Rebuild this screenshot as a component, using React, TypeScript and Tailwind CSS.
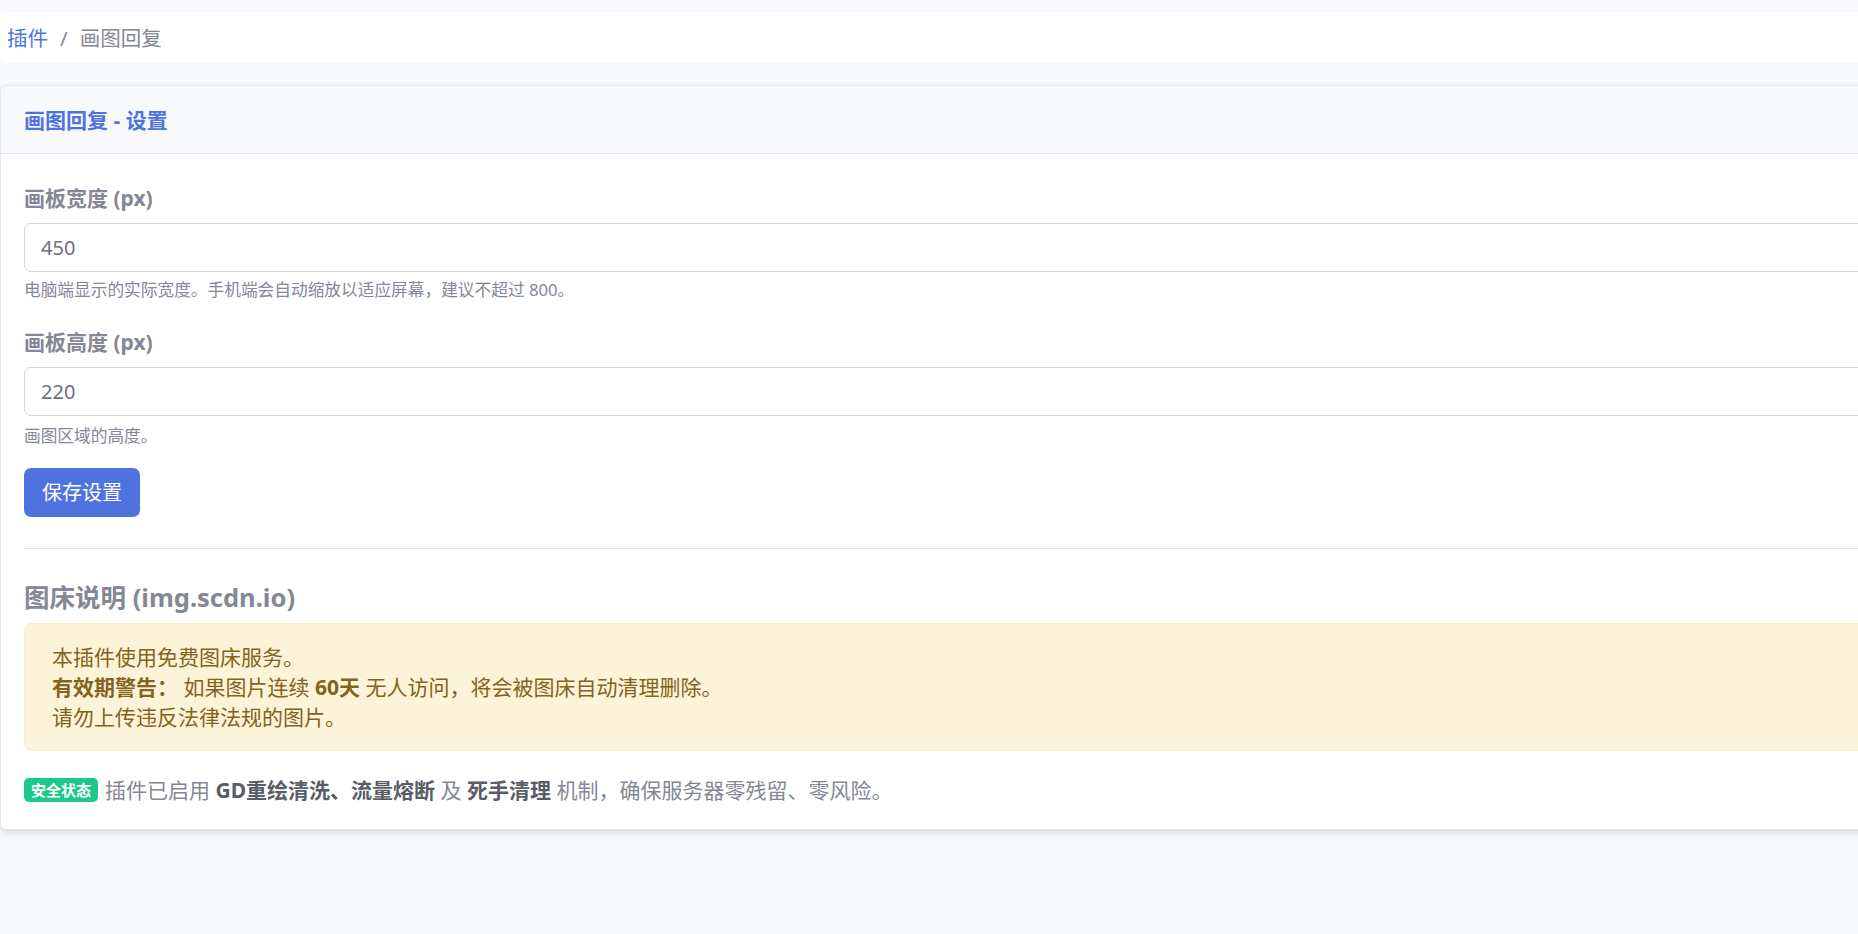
import React from 'react'

// Plugin settings page: breadcrumb + settings card
export default function App() {
  return (
    <div className="min-h-screen overflow-hidden bg-[#f8f9fc] pt-[12px] font-['Noto_Sans','Noto_Sans_CJK_SC',sans-serif] text-[21px] text-[#858796]">
      {/* Breadcrumb */}
      <nav className="mr-[-40px] flex h-[51px] items-center rounded-l-[7px] bg-white pl-[7px] text-[20.5px] leading-[30px]">
        <a href="#" className="text-[#4e73df]">插件</a>
        <span className="px-[12px] text-[#858796]">/</span>
        <span className="text-[#858796]">画图回复</span>
      </nav>

      {/* Settings card */}
      <div className="mr-[-40px] mt-[22px] rounded-[7px] border border-[#e3e6f0] bg-white shadow-[0_3px_6px_rgba(58,59,69,0.15)]">
        <div className="flex h-[68px] items-center rounded-t-[7px] border-b border-[#e3e6f0] bg-[#f8f9fc] pl-[23px] pr-[24px]">
          <h6 className="text-[21px] font-bold leading-[24px] text-[#4e73df]">画图回复 - 设置</h6>
        </div>

        <div className="pl-[23px] pr-[24px] pb-[24px] pt-[29px]">
          <form onSubmit={(e) => e.preventDefault()}>
            <label className="block text-[21px] font-bold leading-[30px] text-[#858796]">画板宽度 (px)</label>
            <input
              type="number"
              defaultValue={450}
              className="mt-[10px] block h-[49px] w-full rounded-[7px] border border-[#d1d3e2] bg-white px-[16px] text-[20px] text-[#6e707e] outline-none"
            />
            <p className="mt-[5px] text-[16.7px] leading-[26px] text-[#858796]">电脑端显示的实际宽度。手机端会自动缩放以适应屏幕，建议不超过 800。</p>

            <label className="mt-[24px] block text-[21px] font-bold leading-[30px] text-[#858796]">画板高度 (px)</label>
            <input
              type="number"
              defaultValue={220}
              className="mt-[10px] block h-[49px] w-full rounded-[7px] border border-[#d1d3e2] bg-white px-[16px] text-[20px] text-[#6e707e] outline-none"
            />
            <p className="mt-[7px] text-[16.7px] leading-[26px] text-[#858796]">画图区域的高度。</p>

            <button
              type="submit"
              className="mt-[19px] h-[49px] rounded-[7px] bg-[#4e73df] px-[18px] text-[20px] leading-[30px] text-white"
            >
              保存设置
            </button>
          </form>

          <hr className="mt-[31px] border-0 border-t border-[#e3e6f0]" />

          <h5 className="mt-[33px] text-[25.5px] font-bold leading-[30px] text-[#858796]">图床说明 (img.scdn.io)</h5>

          <div className="mt-[11px] rounded-[7px] border border-[#fceec9] bg-[#fdf3d8] px-[27px] py-[18px] text-[21px] leading-[30px] text-[#806520]">
            本插件使用免费图床服务。<br />
            <strong className="font-bold">有效期警告：</strong> 如果图片连续 <strong className="font-bold">60天</strong> 无人访问，将会被图床自动清理删除。<br />
            请勿上传违反法律法规的图片。
          </div>

          <p className="mt-[24px] flex items-center text-[21px] leading-[30px] text-[#858796]">
            <span className="mr-[7px] inline-flex h-[24px] items-center rounded-[5px] bg-[#1cc88a] px-[7px] text-[15px] font-bold leading-none text-white">安全状态</span>
            <span>
              插件已启用 <b className="font-bold text-[#5a5c69]">GD重绘清洗、流量熔断</b> 及 <b className="font-bold text-[#5a5c69]">死手清理</b> 机制，确保服务器零残留、零风险。
            </span>
          </p>
        </div>
      </div>
    </div>
  )
}
